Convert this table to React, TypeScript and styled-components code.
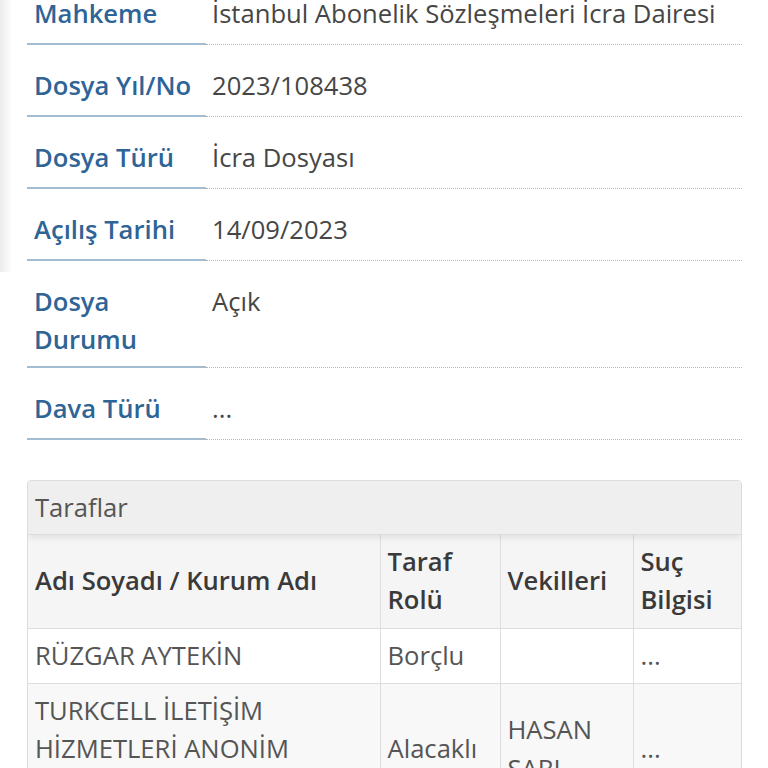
import React from "react";
import styled, { createGlobalStyle } from "styled-components";

const GlobalStyle = createGlobalStyle`
  html, body {
    margin: 0;
    padding: 0;
    background: #ffffff;
    overflow: hidden;
  }
  body {
    font-family: "Open Sans", "Noto Sans", sans-serif;
    font-size: 25.6px;
    line-height: 38.4px;
    color: #555555;
  }
  * { box-sizing: border-box; }
`;

const Viewport = styled.div`
  position: relative;
  width: 768px;
  height: 768px;
  overflow: hidden;
`;

const EdgeShade = styled.div`
  position: absolute;
  left: 0;
  top: 0;
  width: 12px;
  height: 272px;
  background: linear-gradient(to right, #ececec, rgba(255, 255, 255, 0));
`;

const Page = styled.main`
  margin-top: -27px;
  padding: 0 26px 0 27px;
`;

const DetailList = styled.dl`
  display: grid;
  grid-template-columns: 179px 1fr;
  margin: 0;
`;

const Term = styled.dt`
  margin: 0;
  padding: 22px 6px 6.6px 7px;
  font-weight: 600;
  color: #2e6496;
  border-bottom: 2px solid #a3bccf;
`;

const Desc = styled.dd`
  margin: 0;
  padding: 22px 6px 10.6px 6px;
  color: #464646;
  border-bottom: 1px dotted #b9b9b9;
`;

const Panel = styled.section`
  margin-top: 40px;
  border: 1px solid #dcdcdc;
  border-radius: 4px;
  overflow: hidden;
`;

const PanelHeading = styled.div`
  position: relative;
  padding: 8px 7px 6px;
  background: #efefef;
  color: #555555;
  border-bottom: 1px solid #dddddd;
  box-shadow: 0 3px 6px rgba(0, 0, 0, 0.08);
`;

const Table = styled.table`
  width: 100%;
  border-collapse: collapse;
  table-layout: fixed;
`;

const HeadCell = styled.th`
  padding: 8px 6px 8px 7px;
  text-align: left;
  vertical-align: middle;
  font-weight: 600;
  color: #3a3a3a;
  background: #f5f5f5;
  border: 1px solid #dddddd;
  border-top: none;
  &:first-child { border-left: none; }
  &:last-child { border-right: none; }
`;

const Row = styled.tr<{ $striped?: boolean }>`
  background: ${(p) => (p.$striped ? "#f8f8f8" : "#ffffff")};
`;

const Cell = styled.td`
  padding: 8px 6px 8px 7px;
  vertical-align: middle;
  color: #555555;
  border: 1px solid #dddddd;
  &:first-child { border-left: none; }
  &:last-child { border-right: none; }
`;

const details: [string, string][] = [
  ["Mahkeme", "İstanbul Abonelik Sözleşmeleri İcra Dairesi"],
  ["Dosya Yıl/No", "2023/108438"],
  ["Dosya Türü", "İcra Dosyası"],
  ["Açılış Tarihi", "14/09/2023"],
  ["Dosya Durumu", "Açık"],
  ["Dava Türü", "..."],
];

const parties = [
  { name: "RÜZGAR AYTEKİN", role: "Borçlu", lawyers: "", crime: "..." },
  {
    name: "TURKCELL İLETİŞİM HİZMETLERİ ANONİM ŞİRKETİ",
    role: "Alacaklı",
    lawyers: "HASAN SARI",
    crime: "...",
  },
];

export default function App() {
  return (
    <Viewport>
      <GlobalStyle />
      <EdgeShade />
      <Page>
        <DetailList>
          {details.map(([k, v]) => (
            <React.Fragment key={k}>
              <Term>{k}</Term>
              <Desc>{v}</Desc>
            </React.Fragment>
          ))}
        </DetailList>
        <Panel>
          <PanelHeading>Taraflar</PanelHeading>
          <Table>
            <colgroup>
              <col style={{ width: 352 }} />
              <col style={{ width: 120 }} />
              <col style={{ width: 133 }} />
              <col />
            </colgroup>
            <thead>
              <tr>
                <HeadCell>Adı Soyadı / Kurum Adı</HeadCell>
                <HeadCell>Taraf Rolü</HeadCell>
                <HeadCell>Vekilleri</HeadCell>
                <HeadCell>Suç Bilgisi</HeadCell>
              </tr>
            </thead>
            <tbody>
              {parties.map((p, i) => (
                <Row key={p.name} $striped={i % 2 === 1}>
                  <Cell>{p.name}</Cell>
                  <Cell>{p.role}</Cell>
                  <Cell>{p.lawyers}</Cell>
                  <Cell>{p.crime}</Cell>
                </Row>
              ))}
            </tbody>
          </Table>
        </Panel>
      </Page>
    </Viewport>
  );
}
